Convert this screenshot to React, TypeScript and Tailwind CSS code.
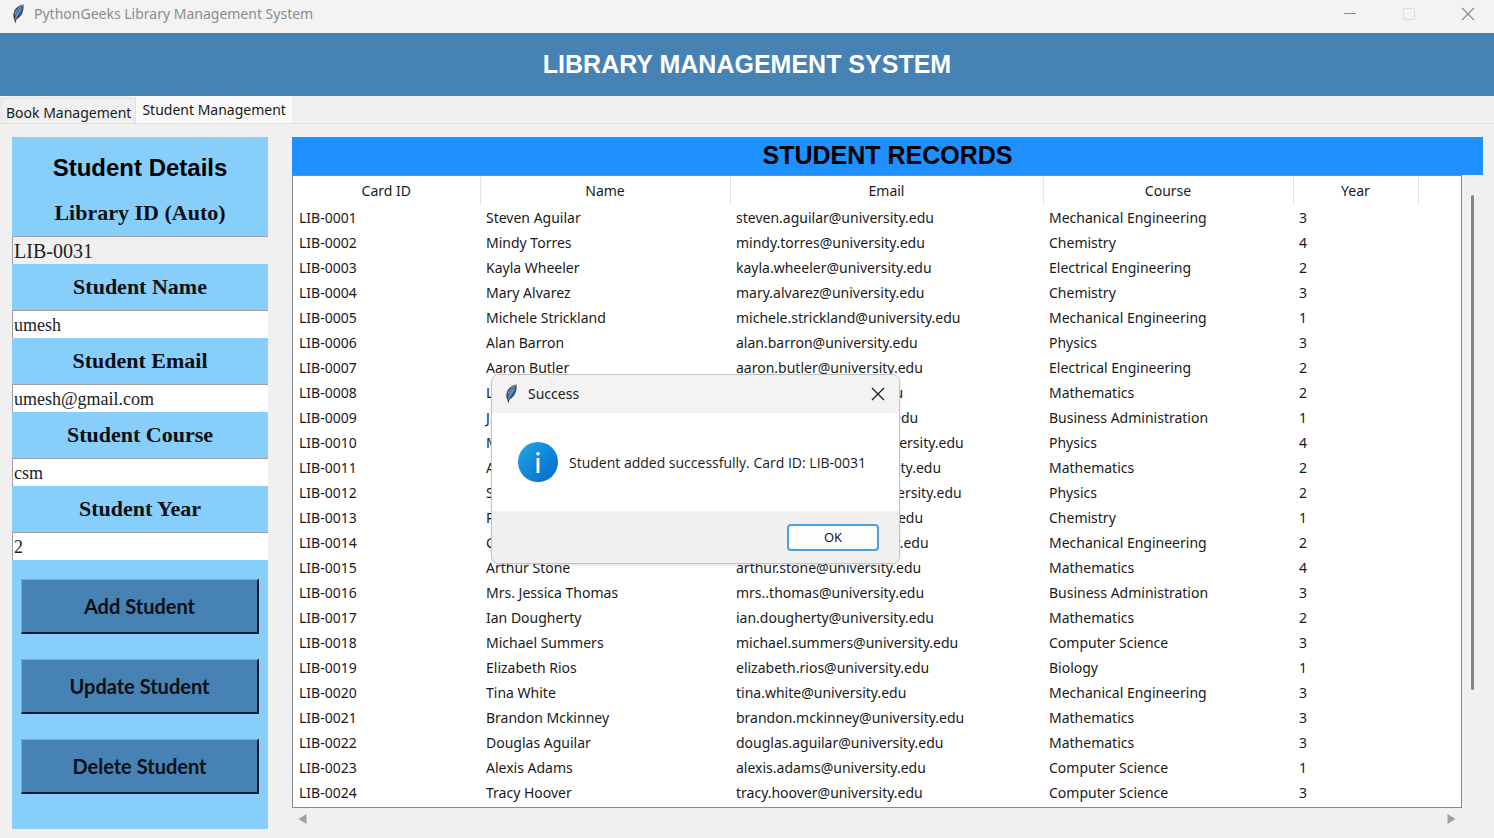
import { useState } from "react";

type Student = [string, string, string, string, number];

const students: Student[] = [
  ["LIB-0001", "Steven Aguilar", "steven.aguilar@university.edu", "Mechanical Engineering", 3],
  ["LIB-0002", "Mindy Torres", "mindy.torres@university.edu", "Chemistry", 4],
  ["LIB-0003", "Kayla Wheeler", "kayla.wheeler@university.edu", "Electrical Engineering", 2],
  ["LIB-0004", "Mary Alvarez", "mary.alvarez@university.edu", "Chemistry", 3],
  ["LIB-0005", "Michele Strickland", "michele.strickland@university.edu", "Mechanical Engineering", 1],
  ["LIB-0006", "Alan Barron", "alan.barron@university.edu", "Physics", 3],
  ["LIB-0007", "Aaron Butler", "aaron.butler@university.edu", "Electrical Engineering", 2],
  ["LIB-0008", "Lisa Perez", "lisa.perez@university.edu", "Mathematics", 2],
  ["LIB-0009", "J. Evans", "jason.evans@university.edu", "Business Administration", 1],
  ["LIB-0010", "Melissa Sanderson", "melissa.sanderson@university.edu", "Physics", 4],
  ["LIB-0011", "Andrea Howard", "andrea.howard@university.edu", "Mathematics", 2],
  ["LIB-0012", "Stephanie Bennett", "stephanie.bennett@university.edu", "Physics", 2],
  ["LIB-0013", "Rachel Evans", "rachel.evans@university.edu", "Chemistry", 1],
  ["LIB-0014", "Carlos Garner", "carlos.garner@university.edu", "Mechanical Engineering", 2],
  ["LIB-0015", "Arthur Stone", "arthur.stone@university.edu", "Mathematics", 4],
  ["LIB-0016", "Mrs. Jessica Thomas", "mrs..thomas@university.edu", "Business Administration", 3],
  ["LIB-0017", "Ian Dougherty", "ian.dougherty@university.edu", "Mathematics", 2],
  ["LIB-0018", "Michael Summers", "michael.summers@university.edu", "Computer Science", 3],
  ["LIB-0019", "Elizabeth Rios", "elizabeth.rios@university.edu", "Biology", 1],
  ["LIB-0020", "Tina White", "tina.white@university.edu", "Mechanical Engineering", 3],
  ["LIB-0021", "Brandon Mckinney", "brandon.mckinney@university.edu", "Mathematics", 3],
  ["LIB-0022", "Douglas Aguilar", "douglas.aguilar@university.edu", "Mathematics", 3],
  ["LIB-0023", "Alexis Adams", "alexis.adams@university.edu", "Computer Science", 1],
  ["LIB-0024", "Tracy Hoover", "tracy.hoover@university.edu", "Computer Science", 3],
];

const columns = ["Card ID", "Name", "Email", "Course", "Year"];

const fields = [
  { id: "name", label: "Student Name", value: "umesh" },
  { id: "email", label: "Student Email", value: "umesh@gmail.com" },
  { id: "course", label: "Student Course", value: "csm" },
  { id: "year", label: "Student Year", value: "2" },
];

function Feather() {
  return (
    <svg width="14" height="20" viewBox="0 0 14 20" aria-hidden="true">
      <path d="M12.4 0.600C8.500 1 4.200 4 2.800 8.600c-.7 2.300-.6 4.600.2 6.200L4.300 19.500l1.200-4C9 13.500 11.300 10.500 12.200 6.200c.4-2 .5-4 .2-5.600z" fill="#3a434e" />
      <path d="M11.300 2.400C8.500 3.500 5.500 6.500 4.400 10c-.4 1.400-.5 2.700-.2 3.800C8.500 11.800 11 7.500 11.300 2.400z" fill="#3d78c6" />
      <path d="M11.800 1.400C8 3 5.200 6 4 10" fill="none" stroke="#9aa7b5" strokeWidth="1" />
      <path d="M10.300 4.500C8 7 6 10.500 4.400 15.500" fill="none" stroke="#8fb5e6" strokeWidth="0.700" />
    </svg>
  );
}

function Cross() {
  return (
    <svg width="14" height="14" viewBox="0 0 14 14" aria-hidden="true">
      <path d="M1 1l12 12M13 1L1 13" fill="none" stroke="currentColor" strokeWidth="1.2" />
    </svg>
  );
}

const labelClass =
  "flex h-[46px] items-center justify-center pb-0.5 font-['Liberation_Serif',serif] text-[22px] font-bold";
const inputClass =
  "block h-7 w-full border-t border-l border-[#a0a0a0] pl-px font-['Liberation_Serif',serif] text-[#222] outline-none";

function StudentForm() {
  return (
    <form
      className="flex w-64 shrink-0 flex-col bg-[#87cefa] text-[#0a0f14]"
      onSubmit={(e) => e.preventDefault()}
    >
      <h2 className="flex h-[53px] items-end justify-center pb-1.5 text-center font-['Liberation_Sans',sans-serif] text-2xl font-bold text-black">
        Student Details
      </h2>
      <label htmlFor="library-id" className={labelClass}>
        Library ID (Auto)
      </label>
      <input id="library-id" readOnly value="LIB-0031" className={inputClass + " bg-[#f0f0f0] text-[20px]"} />
      {fields.map((f) => (
        <div key={f.id}>
          <label htmlFor={f.id} className={labelClass}>
            {f.label}
          </label>
          <input id={f.id} defaultValue={f.value} className={inputClass + " bg-white text-lg"} />
        </div>
      ))}
      <div className="flex flex-col gap-[25px] px-[9px] pt-[19px] pb-[35px]">
        {["Add Student", "Update Student", "Delete Student"].map((t) => (
          <button
            key={t}
            type="button"
            className="h-[55px] border-t border-r-2 border-b-2 border-l border-t-[#6fa8ec] border-r-[#10202e] border-b-[#10202e] border-l-[#6fa8ec] bg-[#4682b4] font-['Lato',sans-serif] text-[20px] font-bold"
          >
            {t}
          </button>
        ))}
      </div>
    </form>
  );
}

function Records() {
  return (
    <section className="flex min-w-0 flex-1 flex-col">
      <h2 className="flex h-[38px] items-center justify-center bg-[#1e90ff] font-['Liberation_Sans',sans-serif] text-[25px] font-bold text-black">
        STUDENT RECORDS
      </h2>
      <div className="flex flex-1">
        <div className="min-w-0 flex-1 overflow-hidden border border-[#828790] bg-white">
          <table className="w-full table-fixed border-collapse text-left text-sm">
            <colgroup>
              <col className="w-[187px]" />
              <col className="w-[250px]" />
              <col className="w-[313px]" />
              <col className="w-[250px]" />
              <col className="w-[125px]" />
              <col />
            </colgroup>
            <thead>
              <tr className="h-[29px]">
                {columns.map((c) => (
                  <th key={c} scope="col" className="border-r border-[#e5e5e5] p-0 text-center font-normal">
                    {c}
                  </th>
                ))}
                <td />
              </tr>
            </thead>
            <tbody>
              {students.map((s) => (
                <tr key={s[0]} className="h-[25px]">
                  {s.map((v, i) => (
                    <td key={i} className="truncate p-0 pl-1.5 leading-[25px]">
                      {v}
                    </td>
                  ))}
                  <td />
                </tr>
              ))}
            </tbody>
          </table>
        </div>
        <div className="flex w-[21px] flex-col items-center pt-5">
          <div className="h-[495px] w-[3px] rounded-full bg-[#858585]" />
        </div>
      </div>
      <div className="mr-[21px] flex h-[21px] items-center justify-between px-1.5 text-[#a0a0a0]">
        <button type="button" aria-label="Scroll left">
          <svg width="9" height="12" viewBox="0 0 9 12">
            <path d="M8.500 1v10L0.500 6z" fill="currentColor" />
          </svg>
        </button>
        <button type="button" aria-label="Scroll right">
          <svg width="9" height="12" viewBox="0 0 9 12">
            <path d="M0.500 1v10L8.500 6z" fill="currentColor" />
          </svg>
        </button>
      </div>
    </section>
  );
}

function SuccessDialog({ onClose }: { onClose: () => void }) {
  return (
    <div
      role="dialog"
      aria-labelledby="dialog-title"
      className="absolute top-[374px] left-[491px] flex w-[409px] flex-col overflow-hidden rounded-lg border border-[#c4c4c4] bg-white shadow-sm"
    >
      <div className="flex h-[38px] items-center bg-[#f3f3f3] pr-3.5 pb-px pl-3">
        <Feather />
        <h3 id="dialog-title" className="ml-2.5 flex-1 text-sm">
          Success
        </h3>
        <button type="button" aria-label="Close" onClick={onClose} className="text-[#1a1a1a]">
          <Cross />
        </button>
      </div>
      <div className="flex h-[98px] items-center gap-[11px] pl-[26px]">
        <svg width="40" height="40" viewBox="0 0 40 40" aria-hidden="true">
          <defs>
            <linearGradient id="info" x1="0" y1="0" x2="1" y2="1">
              <stop offset="0.100" stopColor="#1ea0e6" />
              <stop offset="0.900" stopColor="#0670d0" />
            </linearGradient>
          </defs>
          <circle cx="20" cy="20" r="20" fill="url(#info)" />
          <circle cx="20" cy="11.800" r="1.800" fill="#fff" />
          <path d="M20 16v15" stroke="#fff" strokeWidth="2.800" />
        </svg>
        <p className="pt-0.5 font-['Open_Sans',sans-serif] text-sm">
          Student added successfully. Card ID: LIB-0031
        </p>
      </div>
      <div className="flex h-[52px] items-center justify-end bg-[#f0f0f0] pr-5">
        <button
          type="button"
          onClick={onClose}
          className="h-[27px] w-[92px] rounded border-2 border-[#4a9fe0] bg-[#fdfdfd] pt-0.5 text-[13px]"
        >
          OK
        </button>
      </div>
    </div>
  );
}

export default function App() {
  const [open, setOpen] = useState(true);
  return (
    <div className="relative flex min-h-screen flex-col bg-[#f0f0f0] font-['Noto_Sans','Open_Sans',sans-serif] text-[#1a1a1a]">
      <header className="flex h-[33px] items-center bg-[#f3f3f3] pr-[19px] pb-[5px] pl-[11px] text-[#8c8c8c]">
        <Feather />
        <span className="ml-[9px] flex-1 text-sm">PythonGeeks Library Management System</span>
        <div className="flex items-center gap-[45px]">
          <button type="button" aria-label="Minimize">
            <svg width="14" height="14" viewBox="0 0 14 14">
              <path d="M1 6.500h12" stroke="currentColor" />
            </svg>
          </button>
          <button type="button" aria-label="Maximize" disabled className="text-[#dcdcdc]">
            <svg width="14" height="14" viewBox="0 0 14 14">
              <rect x="1.500" y="1.500" width="11" height="11" rx="1" fill="none" stroke="currentColor" />
            </svg>
          </button>
          <button type="button" aria-label="Close window">
            <Cross />
          </button>
        </div>
      </header>
      <h1 className="flex h-[63px] items-center justify-center bg-[#4682b4] font-['Liberation_Sans',sans-serif] text-[25px] font-bold text-white">
        LIBRARY MANAGEMENT SYSTEM
      </h1>
      <nav role="tablist" className="flex h-7 items-end border-b border-[#e2e2e2] text-sm">
        <button role="tab" type="button" aria-selected="false" className="ml-px h-[25px] border border-b-0 border-[#e2e2e2] px-1 pt-1">
          Book Management
        </button>
        <button role="tab" type="button" aria-selected="true" className="h-[27px] bg-[#f9f9f9] px-1.5">
          Student Management
        </button>
      </nav>
      <main className="flex flex-1 gap-6 pt-[13px] pr-[11px] pb-[9px] pl-3">
        <StudentForm />
        <Records />
      </main>
      {open && <SuccessDialog onClose={() => setOpen(false)} />}
    </div>
  );
}
